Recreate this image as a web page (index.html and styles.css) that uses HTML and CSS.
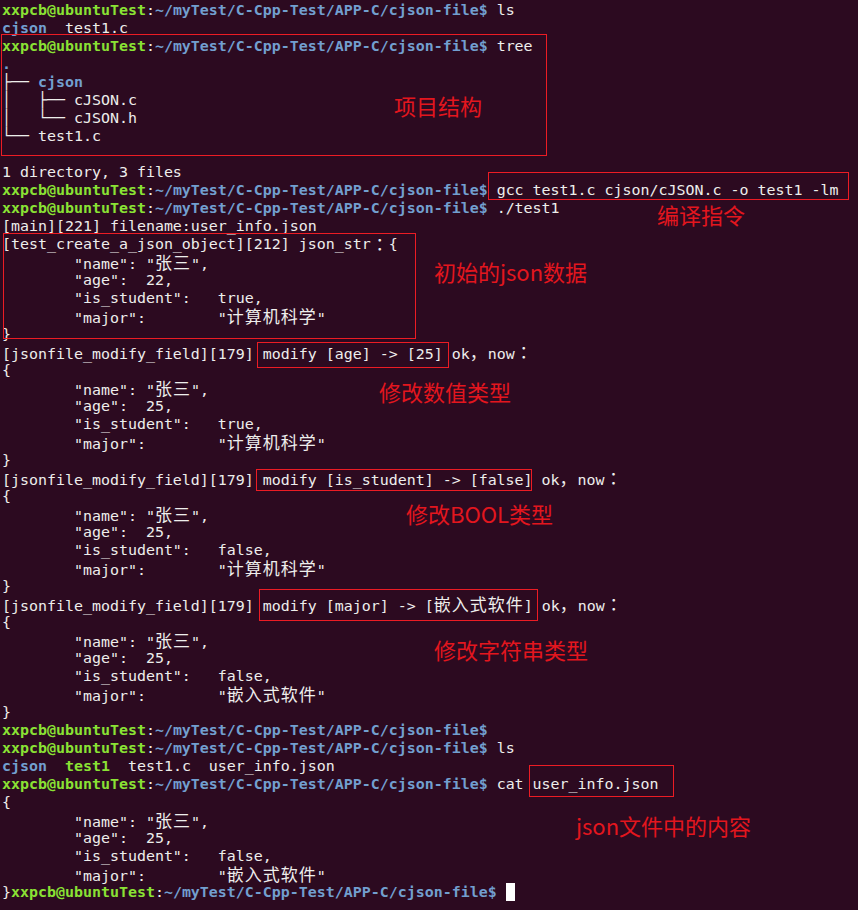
FILE: index.html
```html
<!DOCTYPE html>
<html lang="zh-CN">
<head>
<meta charset="utf-8">
<title>terminal</title>
<link rel="stylesheet" href="styles.css">
</head>
<body>
<div class="screen">
  <div class="term">
    <div class="ln"><span class="g">xxpcb@ubuntuTest</span>:<span class="b">~/myTest/C-Cpp-Test/APP-C/cjson-file$</span> ls</div>
    <div class="ln"><span class="b">cjson</span>  test1.c</div>
    <div class="ln"><span class="g">xxpcb@ubuntuTest</span>:<span class="b">~/myTest/C-Cpp-Test/APP-C/cjson-file$</span> tree</div>
    <div class="ln"><span class="b">.</span></div>
    <div class="ln">├── <span class="b">cjson</span></div>
    <div class="ln">│   ├── cJSON.c</div>
    <div class="ln">│   └── cJSON.h</div>
    <div class="ln">└── test1.c</div>
    <div class="ln"></div>
    <div class="ln">1 directory, 3 files</div>
    <div class="ln"><span class="g">xxpcb@ubuntuTest</span>:<span class="b">~/myTest/C-Cpp-Test/APP-C/cjson-file$</span> gcc test1.c cjson/cJSON.c -o test1 -lm</div>
    <div class="ln"><span class="g">xxpcb@ubuntuTest</span>:<span class="b">~/myTest/C-Cpp-Test/APP-C/cjson-file$</span> ./test1</div>
    <div class="ln">[main][221] filename:user_info.json</div>
    <div class="ln">[test_create_a_json_object][212] json_str<span class="colon">：</span>{</div>
    <div class="ln">        "name": "<span class="w">张三</span>",</div>
    <div class="ln">        "age":  22,</div>
    <div class="ln">        "is_student":   true,</div>
    <div class="ln">        "major":        "<span class="w">计算机科学</span>"</div>
    <div class="ln">}</div>
    <div class="ln">[jsonfile_modify_field][179] modify [age] -&gt; [25] ok<span class="w">，</span>now<span class="colon">：</span></div>
    <div class="ln">{</div>
    <div class="ln">        "name": "<span class="w">张三</span>",</div>
    <div class="ln">        "age":  25,</div>
    <div class="ln">        "is_student":   true,</div>
    <div class="ln">        "major":        "<span class="w">计算机科学</span>"</div>
    <div class="ln">}</div>
    <div class="ln">[jsonfile_modify_field][179] modify [is_student] -&gt; [false] ok<span class="w">，</span>now<span class="colon">：</span></div>
    <div class="ln">{</div>
    <div class="ln">        "name": "<span class="w">张三</span>",</div>
    <div class="ln">        "age":  25,</div>
    <div class="ln">        "is_student":   false,</div>
    <div class="ln">        "major":        "<span class="w">计算机科学</span>"</div>
    <div class="ln">}</div>
    <div class="ln">[jsonfile_modify_field][179] modify [major] -&gt; [<span class="w">嵌入式软件</span>] ok<span class="w">，</span>now<span class="colon">：</span></div>
    <div class="ln">{</div>
    <div class="ln">        "name": "<span class="w">张三</span>",</div>
    <div class="ln">        "age":  25,</div>
    <div class="ln">        "is_student":   false,</div>
    <div class="ln">        "major":        "<span class="w">嵌入式软件</span>"</div>
    <div class="ln">}</div>
    <div class="ln"><span class="g">xxpcb@ubuntuTest</span>:<span class="b">~/myTest/C-Cpp-Test/APP-C/cjson-file$</span></div>
    <div class="ln"><span class="g">xxpcb@ubuntuTest</span>:<span class="b">~/myTest/C-Cpp-Test/APP-C/cjson-file$</span> ls</div>
    <div class="ln"><span class="b">cjson</span>  <span class="g">test1</span>  test1.c  user_info.json</div>
    <div class="ln"><span class="g">xxpcb@ubuntuTest</span>:<span class="b">~/myTest/C-Cpp-Test/APP-C/cjson-file$</span> cat user_info.json</div>
    <div class="ln">{</div>
    <div class="ln">        "name": "<span class="w">张三</span>",</div>
    <div class="ln">        "age":  25,</div>
    <div class="ln">        "is_student":   false,</div>
    <div class="ln">        "major":        "<span class="w">嵌入式软件</span>"</div>
    <div class="ln">}<span class="g">xxpcb@ubuntuTest</span>:<span class="b">~/myTest/C-Cpp-Test/APP-C/cjson-file$</span> <span class="cursor"></span></div>
  </div>

  <div class="box box-tree"></div>
  <div class="box box-gcc"></div>
  <div class="box box-json"></div>
  <div class="box box-age"></div>
  <div class="box box-bool"></div>
  <div class="box box-major"></div>
  <div class="box box-cat"></div>

  <div class="note note-tree">项目结构</div>
  <div class="note note-gcc">编译指令</div>
  <div class="note note-json">初始的json数据</div>
  <div class="note note-num">修改数值类型</div>
  <div class="note note-bool">修改BOOL类型</div>
  <div class="note note-str">修改字符串类型</div>
  <div class="note note-file">json文件中的内容</div>
</div>
</body>
</html>
```
FILE: styles.css
```css
html, body {
  margin: 0;
  padding: 0;
  background: #2c0a20;
}
.screen {
  position: relative;
  width: 858px;
  height: 910px;
  overflow: hidden;
  background: #2c0a20;
}
.term {
  padding: 1px 0 0 2px;
  font-family: "DejaVu Sans Mono", "Liberation Mono", monospace;
  font-size: 14.95px;
  color: #eeeeec;
}
.ln {
  height: 18px;
  line-height: 18px;
  white-space: pre;
  overflow: visible;
}
.g {
  color: #8ae234;
  font-weight: bold;
}
.b {
  color: #729fcf;
  font-weight: bold;
}
.w {
  font-family: "Noto Sans CJK SC", sans-serif;
  font-size: 17px;
  letter-spacing: 1px;
  line-height: 18px;
}
.colon {
  display: inline-block;
  width: 18px;
  height: 18px;
  line-height: 18px;
  text-align: center;
  font-family: "Noto Sans CJK JP", sans-serif;
  font-size: 17px;
  vertical-align: top;
}
.cursor {
  display: inline-block;
  width: 9px;
  height: 18px;
  background: #ffffff;
  vertical-align: top;
}
.box {
  position: absolute;
  box-sizing: border-box;
  border: 1px solid #ec1c24;
}
.box-tree  { left: 1px;   top: 34px;  width: 546px; height: 122px; }
.box-gcc   { left: 488px; top: 172px; width: 361px; height: 28px; }
.box-json  { left: 3px;   top: 233px; width: 413px; height: 106px; }
.box-age   { left: 257px; top: 342px; width: 192px; height: 26px; }
.box-bool  { left: 256px; top: 469px; width: 276px; height: 22px; }
.box-major { left: 259px; top: 589px; width: 279px; height: 32px; }
.box-cat   { left: 529px; top: 765px; width: 145px; height: 32px; }

.note {
  position: absolute;
  font-family: "Noto Sans CJK SC", sans-serif;
  font-size: 22px;
  line-height: 24px;
  color: #e3161e;
  white-space: nowrap;
}
.note-tree { left: 394px; top: 93px; }
.note-gcc  { left: 657px; top: 202px; }
.note-json { left: 434px; top: 259px; }
.note-num  { left: 379px; top: 379px; }
.note-bool { left: 406px; top: 501px; }
.note-str  { left: 434px; top: 637px; }
.note-file { left: 576px; top: 813px; }
```
